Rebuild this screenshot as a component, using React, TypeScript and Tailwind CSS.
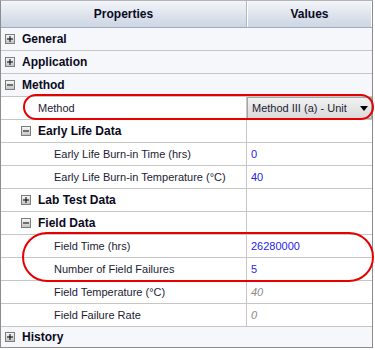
import type { ReactElement } from 'react';

type Row =
    | { kind: 'cat'; label: string; open: boolean }
    | { kind: 'sub'; label: string; open: boolean }
    | { kind: 'prop'; label: string; value?: string; level: 1 | 2; readOnly?: boolean; dropdown?: boolean };

const rows: Row[] = [
    { kind: 'cat', label: 'General', open: false },
    { kind: 'cat', label: 'Application', open: false },
    { kind: 'cat', label: 'Method', open: true },
    { kind: 'prop', label: 'Method', value: 'Method III (a) - Unit', level: 1, dropdown: true },
    { kind: 'sub', label: 'Early Life Data', open: true },
    { kind: 'prop', label: 'Early Life Burn-in Time (hrs)', value: '0', level: 2 },
    { kind: 'prop', label: 'Early Life Burn-in Temperature (°C)', value: '40', level: 2 },
    { kind: 'sub', label: 'Lab Test Data', open: false },
    { kind: 'sub', label: 'Field Data', open: true },
    { kind: 'prop', label: 'Field Time (hrs)', value: '26280000', level: 2 },
    { kind: 'prop', label: 'Number of Field Failures', value: '5', level: 2 },
    { kind: 'prop', label: 'Field Temperature (°C)', value: '40', level: 2, readOnly: true },
    { kind: 'prop', label: 'Field Failure Rate', value: '0', level: 2, readOnly: true },
];

function Toggle({ open }: { open: boolean }): ReactElement {
    return (
        <div className="flex h-[10px] w-[10px] shrink-0 items-center justify-center border border-[#7c7c7c] bg-gradient-to-b from-[#f6f6f6] to-[#c4c4c4]">
            <svg width="6" height="6" viewBox="0 0 6 6">
                <rect x="0" y="2.5" width="6" height="1" fill="#000" />
                {!open && <rect x="2.5" y="0" width="1" height="6" fill="#000" />}
            </svg>
        </div>
    );
}

function GridRow({ row }: { row: Row }): ReactElement {
    if (row.kind === 'cat') {
        return (
            <div className="flex h-[23px] items-center border-b border-[#c6c6c6] bg-[#f6f7fb] pl-[4px]">
                <Toggle open={row.open} />
                <span className="ml-[7px] text-[12px] font-bold text-[#0a0a1e]">{row.label}</span>
            </div>
        );
    }

    if (row.kind === 'sub') {
        return (
            <div className="flex h-[23px] border-b border-[#c6c6c6] bg-white">
                <div className="flex w-[246px] items-center border-r border-[#c6c6c6] pl-[20px]">
                    <Toggle open={row.open} />
                    <span className="ml-[7px] text-[12px] font-bold text-[#0a0a1e]">{row.label}</span>
                </div>
                <div className="flex-1" />
            </div>
        );
    }

    return (
        <div className="flex h-[23px] border-b border-[#c6c6c6] bg-white">
            <div className={`flex w-[246px] items-center border-r border-[#c6c6c6] text-[11px] text-[#1c1c34] ${row.level === 1 ? 'pl-[37px]' : 'pl-[53px]'}`}>
                {row.label}
            </div>
            {row.dropdown ? (
                <div className="flex flex-1 items-center justify-between border border-[#a6a6a6] bg-gradient-to-b from-[#f2f2f2] to-[#dadada] pl-[4px] pr-[3px] text-[11px] text-[#1c1c34]">
                    <span>{row.value}</span>
                    <svg width="8" height="5" viewBox="0 0 8 5">
                        <polygon points="0,0 8,0 4,5" fill="#000" />
                    </svg>
                </div>
            ) : (
                <div className={`flex flex-1 items-center pl-[4px] text-[11px] ${row.readOnly ? 'italic text-[#8a8a8a]' : 'text-[#2424e6]'}`}>
                    {row.value}
                </div>
            )}
        </div>
    );
}

export default function App(): ReactElement {
    return (
        <div className="h-[350px] w-[375px] bg-white font-['Liberation_Sans',Arial,sans-serif]">
            <div className="relative flex h-[348px] w-[373px] flex-col border border-[#8c8c8c] border-t-[#b4b4b4]">
                {/* header */}
                <div className="flex h-[27px] border-b border-[#a4acba] bg-gradient-to-b from-[#f3f5f9] to-[#ccd5e3] text-[12px] font-bold text-[#0a0a1e]">
                    <div className="flex w-[246px] items-center justify-center border-r border-[#aeb6c4]">Properties</div>
                    <div className="flex flex-1 items-center justify-center border-l border-r border-white">Values</div>
                </div>

                {rows.map((row, i) => (
                    <GridRow key={i} row={row} />
                ))}

                <div className="flex h-[20px] items-center bg-[#f6f7fb] pl-[4px]">
                    <Toggle open={false} />
                    <span className="ml-[7px] text-[12px] font-bold text-[#0a0a1e]">History</span>
                </div>

                {/* red annotation ellipses */}
                <div className="pointer-events-none absolute left-[22px] top-[93px] h-[26px] w-[351px] rounded-[13px] border-2 border-[#e80000]" />
                <div className="pointer-events-none absolute left-[21px] top-[231px] h-[50px] w-[352px] rounded-[25px] border-2 border-[#e80000]" />
            </div>
        </div>
    );
}
